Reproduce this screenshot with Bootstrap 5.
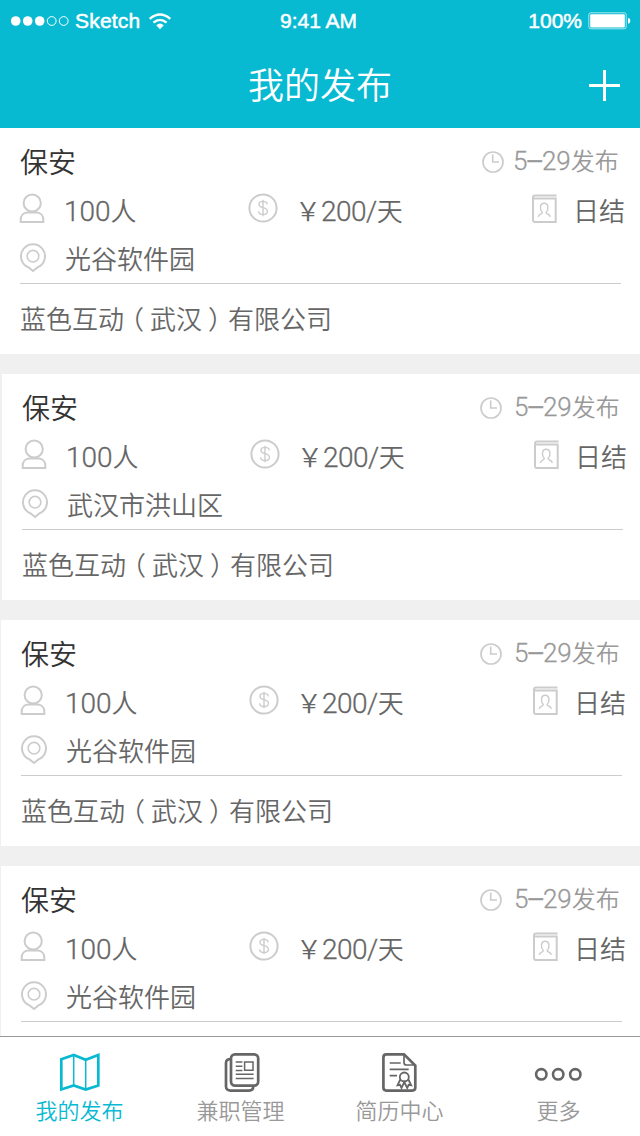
<!DOCTYPE html>
<html lang="zh-CN">
<head>
<meta charset="utf-8">
<meta name="viewport" content="width=device-width, initial-scale=1">
<title>我的发布</title>
<link href="https://cdn.jsdelivr.net/npm/bootstrap@5.3.0/dist/css/bootstrap.min.css" rel="stylesheet">
<style>
body{font-family:"Liberation Sans","Noto Sans CJK SC",sans-serif;font-weight:350;background:#f0f0f0;color:#666;overflow:hidden}
svg{display:block;flex:none;fill:none}
.screen{width:640px;height:1136px}
.top-area{background:#08b9d2;height:128px;color:#fff}
.status{height:41px;display:grid;grid-template-columns:1fr auto 1fr;font-size:21px;line-height:42px;font-weight:400;-webkit-text-stroke:.5px #fff;padding:0 9px 0 10px}
.status .clock-text{margin-left:-4px}
.title-bar{height:87px;display:grid;grid-template-columns:1fr auto 1fr;padding:0 20px}
.title-bar h1{font-size:36px;line-height:92px;font-weight:350;margin:0}
.plus{margin-top:29px}
.posts{gap:20px}
.post{height:226px;padding:10px 0 0 20px;font-size:26px;flex:none;border-radius:0;border:0;color:#666}
.shift-1{margin-left:1px}
.shift-2{margin-left:2px}
.line{height:48px;line-height:52px}
.job{font-size:28px;line-height:52px;font-weight:350;color:#333;margin:0}
.when{font-size:24px;line-height:46px;height:47px;color:#999;margin-left:auto;width:160px;gap:12px}
.when-near{width:158px;gap:9px}
.post .num{font-family:Roboto,"Liberation Sans",sans-serif;font-weight:300;font-size:28px;-webkit-text-stroke:.3px currentColor}
.post .rate{letter-spacing:-.5px}
.post .when .num{font-size:26px}
.post .dash{font-family:"Liberation Sans",sans-serif;position:relative;top:-2px}
.facts{display:grid;grid-template-columns:229px 282px 1fr}
.ico{color:#ccc;stroke:currentColor;stroke-width:2}
.who{margin:7px 18px 0 -1px}
.loc{margin:8px 18px 0 -1px}
.pay{margin:7px 17px 0 -1px}
.bk{margin:7px 15px 0 0}
.firm{width:601px;border-top:1px solid #ccc;margin-top:1px;height:71px;line-height:72px}
.po,.pc{font-feature-settings:"halt"}
.po{margin:0 6px 0 7px}
.pc{margin:0 7px 0 6px}
.tabs{height:100px;border-top:1px solid #999;background:#fff;font-size:22px}
.tabs a{color:#999;text-decoration:none;line-height:34px}
.tabs a:first-child,.tabs a:last-child{padding-right:2px}
.tabs svg{color:#666;stroke:currentColor;margin:15px 0 1px}
.tabs a.active,.tabs .active svg{color:#08b9d2}
.tabs .docs{margin-left:3px}
</style>
</head>
<body>
<svg class="d-none">
<symbol id="person" viewBox="0 0 27 31"><circle cx="13.2" cy="10" r="8.6"/><path d="M1.7 29V26.5C1.7 22.5 4.5 19.7 8 19.5H18C21.5 19.7 24.3 22.5 24.3 26.5V29Z"/></symbol>
<symbol id="pin" viewBox="0 0 28 31"><path d="M9.6 25.4A12 12 0 1 1 18.4 25.4L14 29Z"/><circle cx="14" cy="14.2" r="5.8" stroke-width="1.6"/></symbol>
<symbol id="money" viewBox="0 0 30 30"><circle cx="15" cy="15" r="13.6"/><path stroke-width="1.4" d="M15 6.8V23.2M19.2 11.4C19 7.4 11 7.4 11 11.4C11 15.6 19.4 13.8 19.4 18.2C19.4 22.6 10.8 22.6 10.6 18.2"/></symbol>
<symbol id="book" viewBox="0 0 27 31"><path d="M25.5 2.5H4Q2 2.5 2 4.5V27Q2 29 4 29H24.7V5.5H3"/><path stroke-width="1.4" d="M7.5 24V23C7.5 21.3 11.3 21.2 11.3 19.4C8.5 16.5 8.6 10.2 13.2 10.2S17.9 16.5 15.1 19.4C15.1 21.2 19 21.3 19 23V24"/></symbol>
<symbol id="clock" viewBox="0 0 22 22"><circle cx="11" cy="11" r="10" stroke-width="1.7"/><path stroke-width="1.6" d="M10.7 3.5V11H17"/></symbol>
</svg>
<div class="screen d-flex flex-column overflow-hidden">
<header class="top-area flex-shrink-0">
  <div class="status">
    <div class="d-flex align-items-center">
      <svg width="60" height="12" viewBox="0 0 60 12" stroke="#fff"><g fill="#fff" stroke="none"><circle cx="5.7" cy="6" r="4.8"/><circle cx="17.7" cy="6" r="4.8"/><circle cx="29.7" cy="6" r="4.8"/></g><circle cx="41.7" cy="6" r="4.4"/><circle cx="53.7" cy="6" r="4.4"/></svg>
      <span style="margin-left:5px;letter-spacing:.2px">Sketch</span>
      <svg class="ms-2" width="24" height="17" viewBox="0 0 24 17" stroke="#fff" stroke-width="2.3"><path d="M1.7 5.8Q12-2.8 22.3 5.8M5.4 9.7Q12 4 18.6 9.7"/><path d="M8.2 12.3Q12 8.8 15.8 12.3L12 16.2Z" fill="#fff" stroke="none"/></svg>
    </div>
    <span class="clock-text">9:41 AM</span>
    <div class="d-flex align-items-center justify-content-end">
      <span>100%</span>
      <svg style="margin-left:6px" width="43" height="18" viewBox="0 0 43 18"><rect x=".8" y=".8" width="37.4" height="16" rx="2" stroke="#fff" stroke-opacity=".65"/><rect x="2.2" y="2.2" width="34.6" height="13.2" rx="1" fill="#fff"/><path d="M40 6Q42.3 6 42.3 8.8T40 11.6Z" fill="#fff"/></svg>
    </div>
  </div>
  <div class="title-bar"><span></span><h1>我的发布</h1>
    <svg class="plus ms-auto" width="31" height="31" viewBox="0 0 31 31" stroke="#fff" stroke-width="3"><path d="M0 15.5H31M15.5 0V31"/></svg>
  </div>
</header>
<main class="posts d-flex flex-column flex-grow-1 overflow-hidden">
  <article class="post card">
    <div class="line d-flex"><h2 class="job">保安</h2><div class="when when-near d-flex align-items-center"><svg class="ico" width="22" height="22"><use href="#clock"/></svg><span><span class="num">5<span class="dash">–</span>29</span>发布</span></div></div>
    <div class="line facts"><div class="d-flex"><svg class="ico who" width="27" height="31"><use href="#person"/></svg><span><span class="num">100</span>人</span></div><div class="d-flex"><svg class="ico pay" width="30" height="30"><use href="#money"/></svg><span>￥<span class="num rate">200/</span>天</span></div><div class="d-flex"><svg class="ico bk" width="27" height="31"><use href="#book"/></svg><span>日结</span></div></div>
    <div class="line d-flex"><svg class="ico loc" width="28" height="31"><use href="#pin"/></svg><span>光谷软件园</span></div>
    <div class="firm">蓝色互动<span class="po">（</span>武汉<span class="pc">）</span>有限公司</div>
  </article>
  <article class="post card shift-2">
    <div class="line d-flex"><h2 class="job">保安</h2><div class="when d-flex align-items-center"><svg class="ico" width="22" height="22"><use href="#clock"/></svg><span><span class="num">5<span class="dash">–</span>29</span>发布</span></div></div>
    <div class="line facts"><div class="d-flex"><svg class="ico who" width="27" height="31"><use href="#person"/></svg><span><span class="num">100</span>人</span></div><div class="d-flex"><svg class="ico pay" width="30" height="30"><use href="#money"/></svg><span>￥<span class="num rate">200/</span>天</span></div><div class="d-flex"><svg class="ico bk" width="27" height="31"><use href="#book"/></svg><span>日结</span></div></div>
    <div class="line d-flex"><svg class="ico loc" width="28" height="31"><use href="#pin"/></svg><span>武汉市洪山区</span></div>
    <div class="firm">蓝色互动<span class="po">（</span>武汉<span class="pc">）</span>有限公司</div>
  </article>
  <article class="post card shift-1">
    <div class="line d-flex"><h2 class="job">保安</h2><div class="when d-flex align-items-center"><svg class="ico" width="22" height="22"><use href="#clock"/></svg><span><span class="num">5<span class="dash">–</span>29</span>发布</span></div></div>
    <div class="line facts"><div class="d-flex"><svg class="ico who" width="27" height="31"><use href="#person"/></svg><span><span class="num">100</span>人</span></div><div class="d-flex"><svg class="ico pay" width="30" height="30"><use href="#money"/></svg><span>￥<span class="num rate">200/</span>天</span></div><div class="d-flex"><svg class="ico bk" width="27" height="31"><use href="#book"/></svg><span>日结</span></div></div>
    <div class="line d-flex"><svg class="ico loc" width="28" height="31"><use href="#pin"/></svg><span>光谷软件园</span></div>
    <div class="firm">蓝色互动<span class="po">（</span>武汉<span class="pc">）</span>有限公司</div>
  </article>
  <article class="post card shift-1">
    <div class="line d-flex"><h2 class="job">保安</h2><div class="when d-flex align-items-center"><svg class="ico" width="22" height="22"><use href="#clock"/></svg><span><span class="num">5<span class="dash">–</span>29</span>发布</span></div></div>
    <div class="line facts"><div class="d-flex"><svg class="ico who" width="27" height="31"><use href="#person"/></svg><span><span class="num">100</span>人</span></div><div class="d-flex"><svg class="ico pay" width="30" height="30"><use href="#money"/></svg><span>￥<span class="num rate">200/</span>天</span></div><div class="d-flex"><svg class="ico bk" width="27" height="31"><use href="#book"/></svg><span>日结</span></div></div>
    <div class="line d-flex"><svg class="ico loc" width="28" height="31"><use href="#pin"/></svg><span>光谷软件园</span></div>
    <div class="firm"></div>
  </article>
</main>
<nav class="tabs row g-0 flex-shrink-0">
  <a href="#" class="active col d-flex flex-column align-items-center"><svg width="42" height="42" viewBox="0 0 42 42" stroke-width="2.7"><path d="M2.3 7.3L14.7 3L26.7 7.7L39.3 3V33.5L26.7 37.5L14.7 33.5L2.3 37.5Z"/><path stroke-width="1.5" d="M14.7 3V33.5M26.7 7.7V37.5"/></svg>我的发布</a>
  <a href="#" class="col d-flex flex-column align-items-center"><svg class="docs" width="36" height="42" viewBox="0 0 36 42" stroke-width="2.7"><rect x="7" y="2.4" width="27.2" height="31.2" rx="4"/><path d="M7 7C4 7 2 8.5 2 11V34.5C2 37 4 38.6 6.5 38.6H25C28 38.6 29.3 37.5 29.3 34"/><path stroke-width="1.5" d="M11.7 10H18.4M11.7 14.3H18.4M11.7 18.4H18.4M11.7 22.3H29.6M11.7 26.4H29.6M20.6 10H29V18.2H20.6Z"/></svg>兼职管理</a>
  <a href="#" class="col d-flex flex-column align-items-center"><svg width="37" height="42" viewBox="0 0 37 42" stroke-width="2.7"><path d="M23 2.4H5.4Q2.4 2.4 2.4 5.4V35.6Q2.4 38.6 5.4 38.6H31.3Q34.3 38.6 34.3 35.6V13.5Z"/><path stroke-width="1.7" d="M23 2.5V10.5Q23 13 25.5 13H34M8.7 11H19.7M8.7 17.3H27.7M8.7 23.7H16"/><g stroke-width="1.8"><circle cx="23.3" cy="25" r="4.5"/><path d="M19.3 27.5L16.5 33.3L19 32.8L20.5 36L23.3 30L26.2 36L27.7 32.8L30.2 33.3L27.4 27.5"/></g></svg>简历中心</a>
  <a href="#" class="col d-flex flex-column align-items-center"><svg width="50" height="42" viewBox="0 0 50 42" stroke-width="2.6"><circle cx="7.3" cy="22.3" r="5.2"/><circle cx="24.2" cy="22.3" r="5.2"/><circle cx="41.3" cy="22.3" r="5.2"/></svg>更多</a>
</nav>
</div>
<script src="https://cdn.jsdelivr.net/npm/bootstrap@5.3.0/dist/js/bootstrap.bundle.min.js"></script>
</body>
</html>
